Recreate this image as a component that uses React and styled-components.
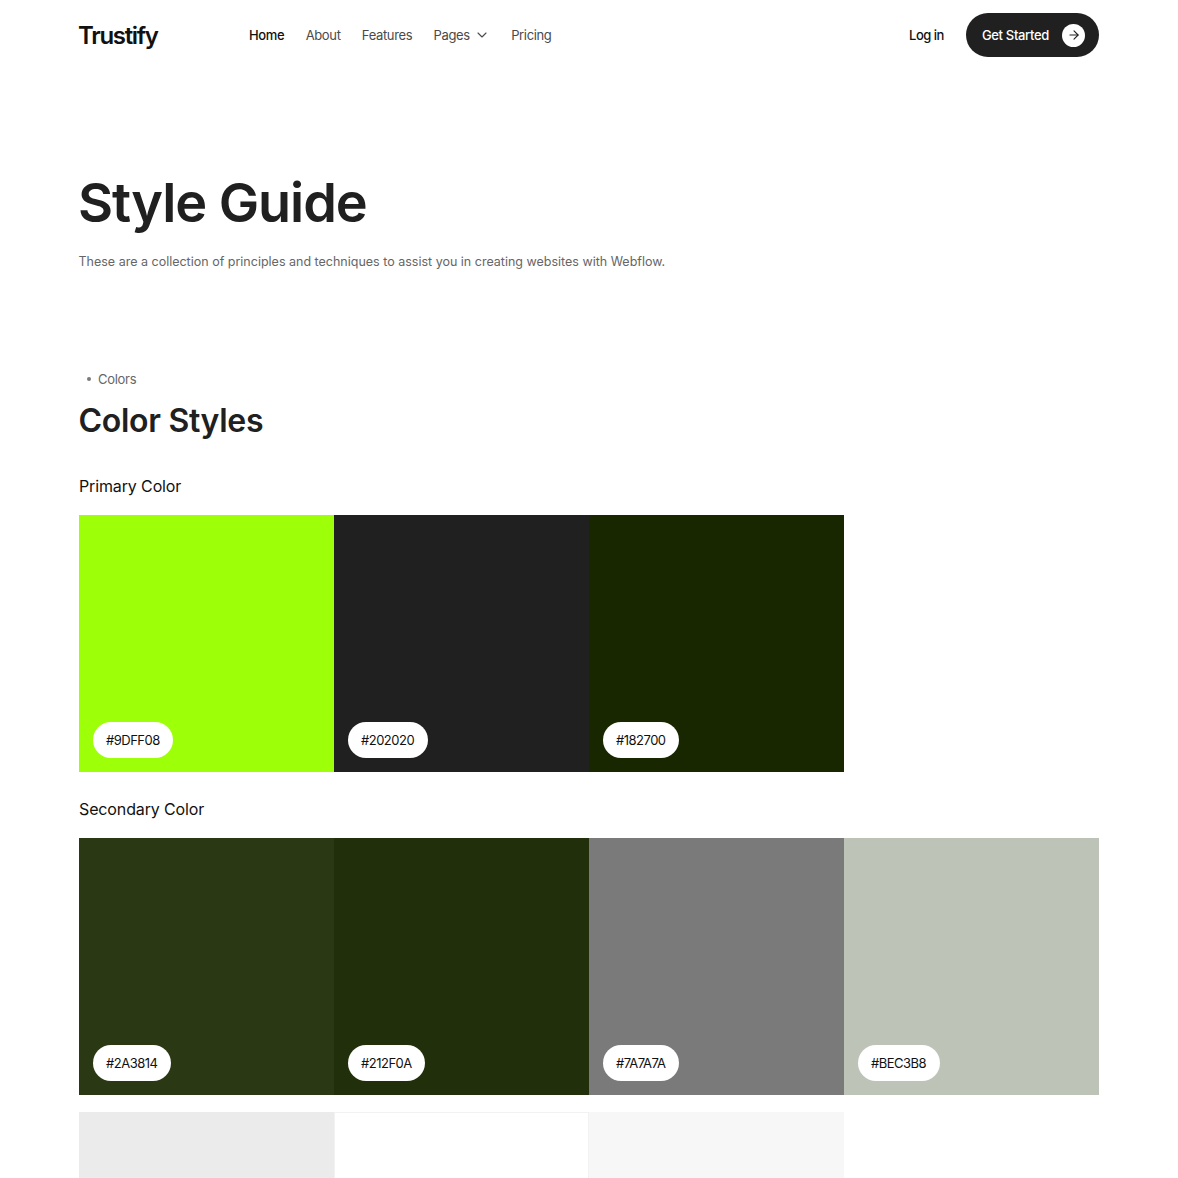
import styled, { createGlobalStyle } from 'styled-components';
import { ChevronDown, ArrowRight } from 'lucide-react';

const GlobalStyle = createGlobalStyle`
    html, body {
        margin: 0;
        padding: 0;
        height: 100%;
        overflow: hidden;
        background: #fff;
        font-family: Inter, 'Liberation Sans', sans-serif;
        color: #202020;
    }
    * {
        box-sizing: border-box;
    }
`;

const navItems = [
    { label: 'Home', active: true },
    { label: 'About' },
    { label: 'Features' },
    { label: 'Pages', dropdown: true },
    { label: 'Pricing' },
];

const primary = [
    { hex: '#9DFF08', color: '#9dff08' },
    { hex: '#202020', color: '#202020' },
    { hex: '#182700', color: '#182700' },
];

const secondary = [
    { hex: '#2A3814', color: '#2a3814' },
    { hex: '#212F0A', color: '#212f0a' },
    { hex: '#7A7A7A', color: '#7a7a7a' },
    { hex: '#BEC3B8', color: '#bec3b8' },
];

const neutral = [
    { color: '#ebebeb' },
    { color: '#ffffff', outlined: true },
    { color: '#f7f7f7' },
];

const App = () => {
    return (
        <Page>
            <GlobalStyle />
            <Header>
                <Logo>Trustify</Logo>
                <Nav>
                    {navItems.map((item) => (
                        <NavLink key={item.label} $active={item.active}>
                            {item.label}
                            {item.dropdown && <ChevronDown size={16} strokeWidth={1.6} />}
                        </NavLink>
                    ))}
                </Nav>
                <Actions>
                    <Login>Log in</Login>
                    <CtaButton>
                        Get Started
                        <CtaIcon>
                            <ArrowRight size={14} strokeWidth={1.9} />
                        </CtaIcon>
                    </CtaButton>
                </Actions>
            </Header>

            <Hero>
                <Title>Style Guide</Title>
                <Lead>These are a collection of principles and techniques to assist you in creating websites with Webflow.</Lead>
            </Hero>

            <Section>
                <Crumbs>
                    <Crumb>Colors</Crumb>
                </Crumbs>
                <SectionTitle>Color Styles</SectionTitle>

                <GroupTitle>Primary Color</GroupTitle>
                <SwatchRow>
                    {primary.map((s) => (
                        <Swatch key={s.hex} $color={s.color}>
                            <HexTag>{s.hex}</HexTag>
                        </Swatch>
                    ))}
                </SwatchRow>

                <GroupTitle $secondary>Secondary Color</GroupTitle>
                <SwatchRow>
                    {secondary.map((s) => (
                        <Swatch key={s.hex} $color={s.color}>
                            <HexTag>{s.hex}</HexTag>
                        </Swatch>
                    ))}
                </SwatchRow>

                <NeutralRow>
                    {neutral.map((s) => (
                        <Swatch key={s.color} $color={s.color} $outlined={s.outlined} />
                    ))}
                </NeutralRow>
            </Section>
        </Page>
    );
};

export default App;

const Page = styled.div`
    width: 100%;
    padding: 0 79px;
`;

const Header = styled.header`
    display: flex;
    align-items: center;
    height: 70px;
`;

const Logo = styled.div`
    width: 170px;
    margin-left: -1px;
    margin-right: 1px;
    font-size: 24px;
    font-weight: 600;
    letter-spacing: -1.3px;
    color: #111;
`;

const Nav = styled.nav`
    display: flex;
    align-items: center;
    gap: 21.3px;
`;

const NavLink = styled.a`
    display: flex;
    align-items: center;
    gap: 4px;
    font-size: 13px;
    letter-spacing: -0.35px;
    color: ${(p) => (p.$active ? '#111' : '#4a4a4a')};
    font-weight: ${(p) => (p.$active ? 500 : 400)};
`;

const Actions = styled.div`
    margin-left: auto;
    display: flex;
    align-items: center;
    gap: 22px;
`;

const Login = styled.a`
    font-size: 13px;
    font-weight: 500;
    letter-spacing: -0.5px;
    color: #111;
`;

const CtaButton = styled.a`
    display: flex;
    align-items: center;
    gap: 13px;
    height: 44px;
    padding: 0 14px 0 16px;
    border-radius: 22px;
    background: #202020;
    color: #fff;
    font-size: 13px;
    font-weight: 500;
    letter-spacing: -0.33px;
`;

const CtaIcon = styled.span`
    display: flex;
    align-items: center;
    justify-content: center;
    width: 23px;
    height: 23px;
    border-radius: 50%;
    background: #fff;
    color: #202020;
`;

const Hero = styled.section`
    padding-top: 101px;
`;

const Title = styled.h1`
    margin: 0 0 0 -1px;
    font-size: 54px;
    line-height: 64px;
    font-weight: 600;
    letter-spacing: -1.05px;
    color: #202020;
`;

const Lead = styled.p`
    margin: 17px 0 0 -0.5px;
    font-size: 12.5px;
    line-height: 20px;
    color: #666;
`;

const Section = styled.section`
    padding-top: 97px;
`;

const Crumbs = styled.ul`
    margin: 0;
    padding: 0 0 0 7.5px;
    list-style: none;
    font-size: 13px;
    line-height: 20px;
    letter-spacing: -0.3px;
    color: #666;
`;

const Crumb = styled.li`
    display: flex;
    align-items: center;
    gap: 7px;
    &:before {
        content: '';
        width: 4.5px;
        height: 4.5px;
        border-radius: 50%;
        background: #7a7a7a;
    }
`;

const SectionTitle = styled.h2`
    margin: 11px 0 0 -0.5px;
    font-size: 32px;
    line-height: 42px;
    font-weight: 600;
    letter-spacing: -0.3px;
    color: #202020;
`;

const GroupTitle = styled.h3`
    margin: ${(p) => (p.$secondary ? '25px' : '32px')} 0 17px;
    font-size: 16px;
    line-height: 24px;
    font-weight: 400;
    letter-spacing: -0.13px;
    color: #111;
`;

const SwatchRow = styled.div`
    display: grid;
    grid-template-columns: repeat(4, 255px);
`;

const NeutralRow = styled(SwatchRow)`
    margin-top: 17px;
`;

const Swatch = styled.div`
    display: flex;
    align-items: flex-end;
    height: 257px;
    padding: 0 0 14.5px 14px;
    background: ${(p) => p.$color};
    border: ${(p) => (p.$outlined ? '1px solid #f2f2f2' : 'none')};
`;

const HexTag = styled.span`
    display: flex;
    align-items: center;
    height: 36px;
    padding: 1px 13.5px 0 13px;
    border-radius: 18px;
    background: #fff;
    color: #111;
    font-size: 13px;
    letter-spacing: -0.5px;
`;
